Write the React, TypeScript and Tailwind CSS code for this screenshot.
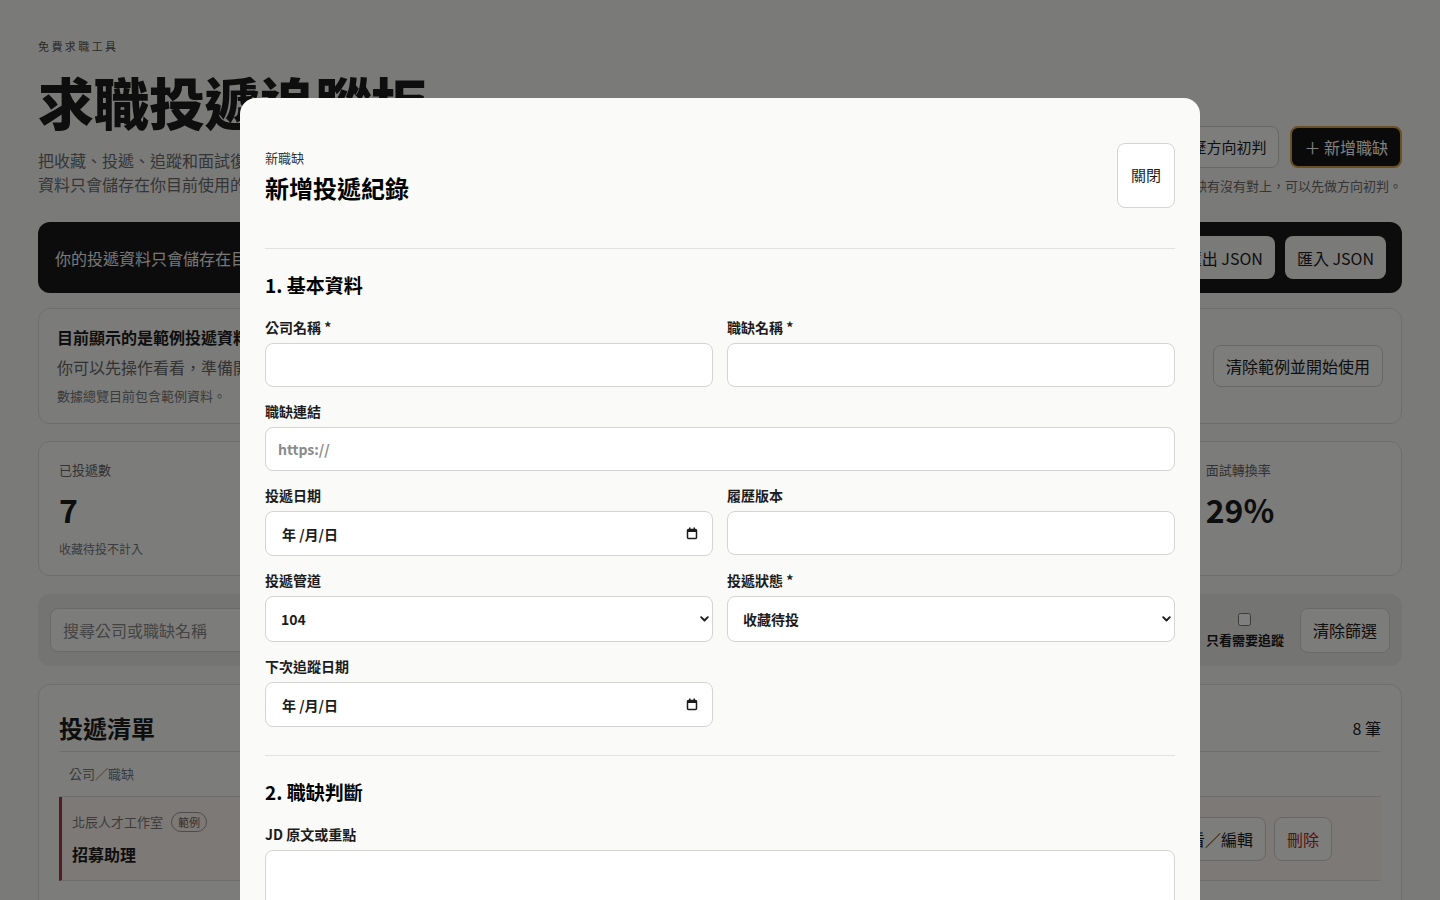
import { useState } from 'react';

const stats = [
  { label: '已投遞數', value: '7', hint: '收藏待投不計入' },
  { label: '等待回覆', value: '3', hint: '已投遞但尚未回覆' },
  { label: '需要追蹤', value: '2', hint: '已超過追蹤日期' },
  { label: '面試中', value: '2', hint: '含一面與二面' },
  { label: '錄取／Offer', value: '0', hint: '恭喜你' },
  { label: '面試轉換率', value: '29%', hint: '' },
];

function CalendarIcon() {
  return (
    <svg width="12" height="13" viewBox="0 0 12 13" className="text-[#1c1c1c]">
      <rect x="1.5" y="2.5" width="9" height="9" rx="1" fill="none" stroke="currentColor" strokeWidth="1.5" />
      <rect x="1.5" y="2.5" width="9" height="2.5" fill="currentColor" />
      <rect x="3" y="0.5" width="1.5" height="2.5" fill="currentColor" />
      <rect x="7.5" y="0.5" width="1.5" height="2.5" fill="currentColor" />
    </svg>
  );
}

function Chevron() {
  return (
    <svg width="9" height="6" viewBox="0 0 9 6" className="text-[#1c1c1c]">
      <path d="M1.2 1.2 L4.5 4.5 L7.8 1.2" fill="none" stroke="currentColor" strokeWidth="1.9" strokeLinecap="round" strokeLinejoin="round" />
    </svg>
  );
}

function Field({ label, children, full }: { label: string; children: React.ReactNode; full?: boolean }) {
  return (
    <div className={full ? 'col-span-2' : ''}>
      <div className="mb-1.5 text-sm leading-5 font-bold text-[#1c1c1c]">{label}</div>
      {children}
    </div>
  );
}

function TextInput({ placeholder }: { placeholder?: string }) {
  return (
    <input
      placeholder={placeholder}
      className="h-[44px] w-full rounded-lg border border-[#d4d4d2] bg-white px-3 text-sm font-semibold text-[#1c1c1c] outline-none placeholder:text-[#8a8a8a]"
    />
  );
}

function DateInput() {
  return (
    <div className="flex h-[45px] w-full items-center justify-between rounded-lg border border-[#d4d4d2] bg-white pr-[14px] pl-4">
      <span className="text-sm font-semibold text-[#1c1c1c]">年 /月/日</span>
      <CalendarIcon />
    </div>
  );
}

function SelectInput({ value, options }: { value: string; options: string[] }) {
  const [v, setV] = useState(value);
  return (
    <div className="relative">
      <select
        value={v}
        onChange={(e) => setV(e.target.value)}
        className="h-[46px] w-full appearance-none rounded-lg border border-[#d4d4d2] bg-white pr-8 pl-[15px] text-sm font-semibold text-[#1c1c1c] outline-none"
      >
        {options.map((o) => (
          <option key={o}>{o}</option>
        ))}
      </select>
      <span className="pointer-events-none absolute top-1/2 right-[4px] -translate-y-1/2">
        <Chevron />
      </span>
    </div>
  );
}

function Page() {
  return (
    <div className="min-h-screen bg-[#f4f4f2] px-[38px] pb-10 text-[#1c1c1c]">
      {/* header */}
      <header className="flex items-end justify-between pt-[38px]">
        <div>
          <div className="text-[11px] leading-4 tracking-[0.22em] text-[#555]">免費求職工具</div>
          <h1 className="mt-4 text-[56px] leading-[62px] font-black tracking-[-0.01em]">求職投遞追蹤板</h1>
          <p className="mt-4 text-base leading-6 text-[#6b6b6b]">
            把收藏、投遞、追蹤和面試復盤整理在同一個地方，不再漏掉任何一次回覆。
            <br />
            資料只會儲存在你目前使用的瀏覽器，不會上傳到任何伺服器。
          </p>
        </div>
        <div className="flex flex-col items-end">
          <div className="flex gap-[11px]">
            <button className="h-[42px] rounded-lg border border-[#cfcfcc] bg-[#fafaf8] px-3 text-[15px]">履歷方向初判</button>
            <button className="h-[42px] rounded-lg border-2 border-[#d4a24a] bg-[#151515] px-3 text-base text-white">＋ 新增職缺</button>
          </div>
          <div className="mt-2 text-[13px] leading-5 text-[#6b6b6b]">貼上 JD 看看你的履歷和職缺有沒有對上，可以先做方向初判。</div>
        </div>
      </header>

      {/* local storage banner */}
      <section className="mt-[26px] flex h-[71px] items-center justify-between rounded-xl bg-[#181818] pr-[16px] pl-[17px]">
        <p className="text-base text-[#f0f0f0]">你的投遞資料只會儲存在目前這個瀏覽器，換裝置或清除瀏覽資料前，記得先匯出備份。</p>
        <div className="flex gap-2.5">
          <button className="h-[43px] rounded-lg bg-[#f5f5f3] px-3 text-base">匯出 JSON</button>
          <button className="h-[43px] rounded-lg bg-[#f5f5f3] px-3 text-base">匯入 JSON</button>
        </div>
      </section>

      {/* sample notice */}
      <section className="mt-[15px] flex items-center justify-between rounded-xl border border-[#dcdcd8] bg-[#f7f7f5] px-[18px] pt-4 pb-[17px]">
        <div>
          <div className="text-base leading-6 font-bold">目前顯示的是範例投遞資料</div>
          <div className="mt-1.5 text-base leading-6 text-[#666]">你可以先操作看看，準備開始記錄自己的投遞時，再清除範例資料。</div>
          <div className="mt-[7px] text-[13px] leading-5 text-[#777]">數據總覽目前包含範例資料。</div>
        </div>
        <button className="h-[42px] rounded-lg border border-[#cfcfcc] bg-[#fafaf8] px-3 text-base">清除範例並開始使用</button>
      </section>

      {/* stats */}
      <section className="mt-[17px] grid grid-cols-6 gap-3">
        {stats.map((s) => (
          <div key={s.label} className="h-[135px] rounded-xl border border-[#dcdcd8] bg-[#f9f9f7] px-5 pt-[18px]">
            <div className="text-[13px] leading-5 text-[#666]">{s.label}</div>
            <div className="mt-[9px] text-[32px] leading-10 font-semibold">{s.value}</div>
            <div className="mt-[11px] text-xs leading-[18px] text-[#777]">{s.hint}</div>
          </div>
        ))}
      </section>

      {/* filters */}
      <section className="mt-[18px] flex h-[72px] items-center gap-3 rounded-xl bg-[#e8e8e5] px-3">
        <input
          placeholder="搜尋公司或職缺名稱"
          className="h-[44px] flex-1 rounded-lg border border-[#d4d4d2] bg-[#f9f9f7] px-3 text-base outline-none placeholder:text-[#888]"
        />
        <select className="h-[44px] w-[160px] rounded-lg border border-[#d4d4d2] bg-[#f9f9f7] px-3 text-base">
          <option>全部狀態</option>
        </select>
        <select className="h-[44px] w-[160px] rounded-lg border border-[#d4d4d2] bg-[#f9f9f7] px-3 text-base">
          <option>全部管道</option>
        </select>
        <label className="flex flex-col items-center gap-1.5 px-1">
          <input type="checkbox" className="h-[13px] w-[13px]" />
          <span className="text-[13px] leading-4 font-bold">只看需要追蹤</span>
        </label>
        <button className="h-[45px] rounded-lg border border-[#d4d4d2] bg-[#f9f9f7] px-3 text-base">清除篩選</button>
      </section>

      {/* list */}
      <section className="mt-[18px] rounded-xl border border-[#dcdcd8] bg-[#f9f9f7] px-5 pt-[27px]">
        <div className="flex items-center justify-between border-b border-[#dcdcd8] pb-[7px]">
          <h2 className="text-2xl leading-8 font-bold">投遞清單</h2>
          <span className="text-base">8 筆</span>
        </div>
        <div className="border-b border-[#dcdcd8] px-2.5 py-3 text-[13px] leading-5 text-[#777]">公司／職缺</div>
        <div className="flex h-[84px] items-center justify-between border-b border-[#dcdcd8] border-l-[3px] border-l-[#a33a3a] bg-[#fbf3ef] pr-[49px] pl-[10px]">
          <div>
            <div className="flex items-center gap-2">
              <span className="text-[13px] text-[#777]">北辰人才工作室</span>
              <span className="rounded-full border border-[#999] px-1.5 text-[11px] leading-[18px] text-[#666]">範例</span>
            </div>
            <div className="mt-2.5 text-base font-bold">招募助理</div>
          </div>
          <div className="flex gap-2">
            <button className="h-[44px] rounded-lg border border-[#cfcfcc] bg-[#fafaf8] px-3 text-base">查看／編輯</button>
            <button className="h-[44px] rounded-lg border border-[#cfcfcc] bg-[#fafaf8] px-3 text-base text-[#b42323]">刪除</button>
          </div>
        </div>
        <div className="flex h-[84px] items-center pl-[13px]">
          <div className="flex items-center gap-2">
            <span className="text-[13px] text-[#777]">青岩設計顧問</span>
            <span className="rounded-full border border-[#999] px-1.5 text-[11px] leading-[18px] text-[#666]">範例</span>
          </div>
        </div>
      </section>
    </div>
  );
}

function Modal() {
  return (
    <div className="fixed inset-0 flex justify-center overflow-hidden bg-black/50">
      <div className="mt-[98px] h-fit w-[960px] rounded-2xl bg-[#fafaf8] px-[25px] pt-[45px] pb-10">
        <div className="flex justify-between border-b border-[#e2e2df] pb-10">
          <div className="pt-[5px]">
            <div className="text-[13px] leading-5 text-[#333]">新職缺</div>
            <h2 className="text-2xl leading-10 font-bold">新增投遞紀錄</h2>
          </div>
          <button className="rounded-lg border border-[#d4d4d2] bg-white px-[13px] text-[15px] text-[#1c1c1c]">關閉</button>
        </div>

        <section className="border-b border-[#e2e2df] pt-[22px] pb-7">
          <h3 className="mb-[18px] text-[19px] leading-7 font-semibold">1. 基本資料</h3>
          <div className="grid grid-cols-2 gap-x-3.5 gap-y-[14px]">
            <Field label="公司名稱 *">
              <TextInput />
            </Field>
            <Field label="職缺名稱 *">
              <TextInput />
            </Field>
            <Field label="職缺連結" full>
              <TextInput placeholder="https://" />
            </Field>
            <Field label="投遞日期">
              <DateInput />
            </Field>
            <Field label="履歷版本">
              <TextInput />
            </Field>
            <Field label="投遞管道">
              <SelectInput value="104" options={['104', '1111', 'LinkedIn', 'Yourator', 'CakeResume', '公司官網', '內推', '其他']} />
            </Field>
            <Field label="投遞狀態 *">
              <SelectInput value="收藏待投" options={['收藏待投', '已投遞', '等待回覆', '面試中', '已錄取', '未錄取']} />
            </Field>
            <Field label="下次追蹤日期">
              <DateInput />
            </Field>
          </div>
        </section>

        <section className="pt-[22px] pb-7">
          <h3 className="mb-[18px] text-[19px] leading-7 font-semibold">2. 職缺判斷</h3>
          <Field label="JD 原文或重點" full>
            <textarea className="h-[140px] w-full rounded-lg border border-[#d4d4d2] bg-white p-3 text-sm outline-none" />
          </Field>
        </section>
      </div>
    </div>
  );
}

export default function App() {
  return (
    <div className="font-['Noto_Sans_CJK_TC','Noto_Sans',sans-serif]">
      <Page />
      <Modal />
    </div>
  );
}
